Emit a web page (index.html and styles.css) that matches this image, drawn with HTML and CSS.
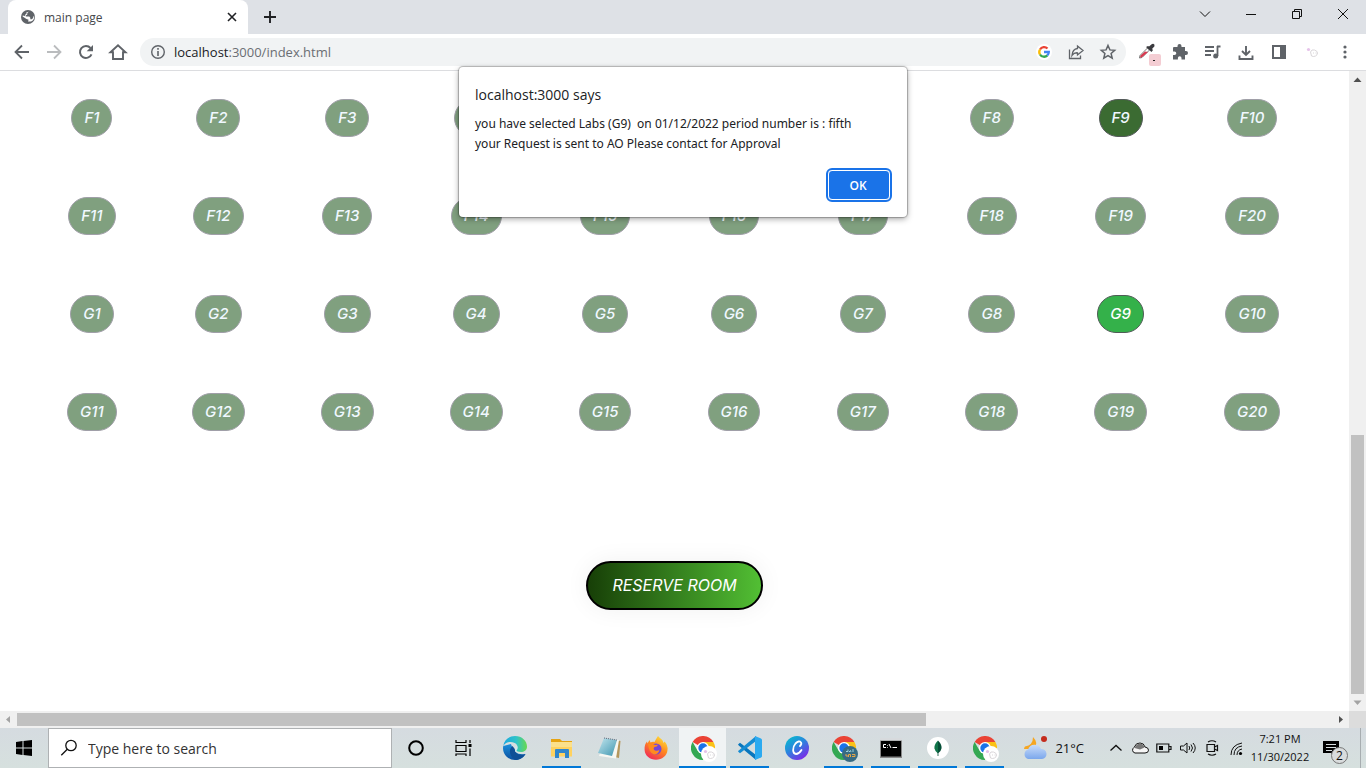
FILE: index.html
```html
<!DOCTYPE html>
<html lang="en">
<head>
<meta charset="utf-8">
<meta name="viewport" content="width=device-width, initial-scale=1">
<title>main page</title>
<link rel="stylesheet" href="styles.css">
</head>
<body>
<svg class="defs" aria-hidden="true">
  <defs>
    <linearGradient id="edge-a" x1="0" y1="0" x2="1" y2="0"><stop offset="0" stop-color="#1ba8e0"/><stop offset=".55" stop-color="#2fc3c8"/><stop offset="1" stop-color="#68d94f"/></linearGradient>
    <linearGradient id="edge-b" x1="0" y1="0" x2="0" y2="1"><stop offset="0" stop-color="#1a8fdc"/><stop offset="1" stop-color="#0b4f9e"/></linearGradient>
    <linearGradient id="canva" x1="0" y1="0" x2=".7" y2="1"><stop offset="0" stop-color="#00c4cc"/><stop offset=".5" stop-color="#2a86dd"/><stop offset="1" stop-color="#7d2ae8"/></linearGradient>
    <linearGradient id="fox" x1=".8" y1="0" x2=".2" y2="1"><stop offset="0" stop-color="#ffe53b"/><stop offset=".45" stop-color="#ff8a1f"/><stop offset="1" stop-color="#f0245c"/></linearGradient>
    <linearGradient id="note" x1="0" y1="0" x2="1" y2="1"><stop offset="0" stop-color="#c3e6ee"/><stop offset="1" stop-color="#3f96b0"/></linearGradient>
    <linearGradient id="cloud" x1="0" y1="0" x2="0" y2="1"><stop offset="0" stop-color="#c8dcfa"/><stop offset="1" stop-color="#7ba7ec"/></linearGradient>
    <symbol id="chrome" viewBox="0 0 24 24">
      <path fill="#ea4335" d="M12 12 1.600 6A12 12 0 0 1 22.400 6H12z"/>
      <path fill="#fbc116" d="M12 6h10.400A12 12 0 0 1 12 24l5.200-9z"/>
      <path fill="#34a853" d="M1.600 6A12 12 0 0 0 12 24l5.200-9-5.200 3-5.200-3z"/>
      <circle cx="12" cy="12" r="6" fill="#fff"/>
      <circle cx="12" cy="12" r="4.700" fill="#1a73e8"/>
    </symbol>
    <symbol id="profile" viewBox="0 0 16 16">
      <circle cx="8" cy="8" r="8" fill="#fff"/>
      <circle cx="4.500" cy="5.500" r="1.600" fill="#e6c3ea"/>
      <path fill="none" stroke="#cfcbcf" stroke-width=".8" d="M6.500 8q1-3 4-2t3 3-2 3-4 0zM9 9h1M11.500 9h1"/>
    </symbol>
  </defs>
</svg>

<div class="screen">
  <header class="tab-strip">
    <div class="tab">
      <svg class="i16" viewBox="0 0 16 16"><circle cx="8" cy="8" r="7" fill="#5f6368"/><path fill="#fff" d="M8.800 2.800 7.300 4v1.600l-1.500.8v1.200h3.500l1 1.200v1.400h1.500l1.300-1.200.3-1.800.9.2q0 3.600-3.300 5.200H8l.6-1.800L6.500 10 2.600 7.600l.2-1.200L5 7l.5-1.700 1-.6V3.200z"/></svg>
      <span class="tab-title">main page</span>
      <button class="plain tab-close" aria-label="Close tab"><svg class="i16" viewBox="0 0 16 16"><path class="ln" stroke-width="1.600" d="m4 4 8 8M12 4l-8 8"/></svg></button>
    </div>
    <button class="plain new-tab" aria-label="New tab"><svg class="i16" viewBox="0 0 16 16"><path class="ln" stroke-width="1.900" d="M8 2v12M2 8h12"/></svg></button>
    <div class="window-controls">
      <button class="plain" aria-label="Search tabs"><svg class="i16" viewBox="0 0 16 16"><path class="ln" d="m3 5.500 5 5 5-5"/></svg></button>
      <button class="plain" aria-label="Minimize"><svg class="i16" viewBox="0 0 16 16"><path class="ln" d="M3 8.500h10"/></svg></button>
      <button class="plain" aria-label="Restore"><svg class="i16" viewBox="0 0 16 16"><path class="ln" d="M3.500 5.500h7v7h-7zM5.500 5V3.500h7v7H11"/></svg></button>
      <button class="plain" aria-label="Close"><svg class="i16" viewBox="0 0 16 16"><path class="ln" d="m3 3 10 10M13 3 3 13"/></svg></button>
    </div>
  </header>

  <nav class="toolbar">
    <div class="nav-buttons">
      <button class="plain" aria-label="Back"><svg class="i20" viewBox="0 0 20 20"><path class="ln" stroke-width="1.800" d="M17 10H4M10 3.500 3.500 10l6.500 6.500"/></svg></button>
      <button class="plain faded" aria-label="Forward"><svg class="i20" viewBox="0 0 20 20"><path class="ln" stroke-width="1.800" d="M3 10h13M10 3.500l6.500 6.500-6.500 6.500"/></svg></button>
      <button class="plain" aria-label="Reload"><svg class="i20" viewBox="0 0 20 20"><path class="ln" stroke-width="2" d="M15.500 12.300A6 6 0 1 1 14.500 6"/><path fill="currentColor" d="M17 3v6.300h-6.300z"/></svg></button>
      <button class="plain" aria-label="Home"><svg class="i20" viewBox="0 0 20 20"><path class="ln" stroke-width="1.900" d="M2.500 10.200 10 3.300l7.500 6.900H15V17H5v-6.800z"/></svg></button>
    </div>
    <div class="omnibox">
      <button class="plain site-info" aria-label="Site information"><svg class="i16" viewBox="0 0 16 16"><circle class="ln" stroke-width="1.400" cx="8" cy="8" r="6.300"/><path class="ln" stroke-width="1.600" d="M8 7v5M8 4v1.700"/></svg></button>
      <div class="address">localhost<span>:3000/index.html</span></div>
      <button class="plain" aria-label="Search with Google"><svg class="i16" viewBox="0 0 16 16"><circle cx="8" cy="8" r="8" fill="#fff"/><g fill="none" stroke-width="2.300"><path stroke="#ea4335" d="M4 5.500a4.800 4.800 0 0 1 7.500-1"/><path stroke="#fbbc05" d="M4 10.500a4.800 4.800 0 0 1 0-5"/><path stroke="#34a853" d="M11.400 11.400A4.800 4.800 0 0 1 4 10.500"/><path stroke="#4285f4" d="M8 8h4.800a4.800 4.800 0 0 1-1.500 3.500"/></g></svg></button>
      <button class="plain" aria-label="Share"><svg class="i18" viewBox="0 0 18 18"><path class="ln" stroke-width="1.300" d="M2.500 6.500v9h11v-3M10.500 3l5.500 4.500-5.500 4.500V9.800q-3.500-.3-5.500 2.700.5-6.500 5.500-7z"/></svg></button>
      <button class="plain" aria-label="Bookmark this page"><svg class="i18" viewBox="0 0 18 18"><path class="ln" stroke-width="1.500" d="m9 2.500 1.900 4.400 4.800.4-3.600 3.200 1.100 4.700L9 12.700l-4.200 2.500 1.100-4.700-3.600-3.200 4.800-.4z"/></svg></button>
    </div>
    <div class="extensions">
      <button class="plain" aria-label="Colour picker"><svg class="i24" viewBox="0 0 24 24"><path fill="#fff" stroke="#777" d="M5 15.500 12.500 8l2 2L7 17.500 4.500 18z"/><path fill="#d93a50" d="m5.500 15.500 4.500-4 3 .5-6 5.300-2 .2z"/><path fill="#3b3b3f" d="m11 7 2-1 1 .6L17 4q3-1 2.500 2.300L17 9l1 1-1.500 2z"/><rect x="14" y="14" width="12" height="12" rx="2" fill="#f4cdd3"/><path fill="#222" d="M18 20h2v1h-2z"/></svg></button>
      <button class="plain" aria-label="Extensions"><svg class="i18" viewBox="0 0 18 18"><path fill="currentColor" d="M3 4h3.500V3a2 2 0 0 1 4 0v1H14v4h1a2 2 0 0 1 0 4h-1v4.500h-3.500V15a1.800 1.800 0 0 0-3.600 0v1.500H2V12h1.500a1.800 1.800 0 0 0 0-3.600H2V5q0-1 1-1"/></svg></button>
      <button class="plain" aria-label="Media controls"><svg class="i20" viewBox="0 0 20 20"><path class="ln" stroke-width="1.800" d="M2 5h9M2 9h9M2 13h6M14.500 4v10M14 4.500h3.500"/><circle cx="12.700" cy="14" r="2.500" fill="currentColor"/></svg></button>
      <button class="plain" aria-label="Downloads"><svg class="i20" viewBox="0 0 20 20"><path class="ln" stroke-width="1.900" d="M10 4v9M6 9l4 4 4-4M3.500 13.500V17h13v-3.500"/></svg></button>
      <button class="plain" aria-label="Side panel"><svg class="i18" viewBox="0 0 18 18"><path fill="currentColor" fill-rule="evenodd" d="M2 2h14v14H2zm2 2v10h6V4z"/></svg></button>
      <button class="plain" aria-label="Profile"><svg class="i16"><use href="#profile"/></svg></button>
      <button class="plain" aria-label="Menu"><svg class="i18" viewBox="0 0 18 18"><g fill="currentColor"><circle cx="9" cy="4" r="1.600"/><circle cx="9" cy="9" r="1.600"/><circle cx="9" cy="14" r="1.600"/></g></svg></button>
    </div>
  </nav>

  <div class="viewport">
    <main class="page">
      <div class="rooms">
        <button class="room" disabled>F1</button><button class="room" disabled>F2</button><button class="room" disabled>F3</button><button class="room" disabled>F4</button><button class="room" disabled>F5</button><button class="room" disabled>F6</button><button class="room" disabled>F7</button><button class="room" disabled>F8</button><button class="room open">F9</button><button class="room" disabled>F10</button>
        <button class="room" disabled>F11</button><button class="room" disabled>F12</button><button class="room" disabled>F13</button><button class="room" disabled>F14</button><button class="room" disabled>F15</button><button class="room" disabled>F16</button><button class="room" disabled>F17</button><button class="room" disabled>F18</button><button class="room" disabled>F19</button><button class="room" disabled>F20</button>
        <button class="room" disabled>G1</button><button class="room" disabled>G2</button><button class="room" disabled>G3</button><button class="room" disabled>G4</button><button class="room" disabled>G5</button><button class="room" disabled>G6</button><button class="room" disabled>G7</button><button class="room" disabled>G8</button><button class="room selected">G9</button><button class="room" disabled>G10</button>
        <button class="room" disabled>G11</button><button class="room" disabled>G12</button><button class="room" disabled>G13</button><button class="room" disabled>G14</button><button class="room" disabled>G15</button><button class="room" disabled>G16</button><button class="room" disabled>G17</button><button class="room" disabled>G18</button><button class="room" disabled>G19</button><button class="room" disabled>G20</button>
      </div>
      <button class="reserve">RESERVE ROOM</button>
    </main>
    <div class="vbar">
      <svg class="arrow" viewBox="0 0 17 17"><path fill="#505050" d="M4.500 11 8.500 6.500 12.500 11z"/></svg>
      <div class="vtrack"><div class="vthumb" style="height: 42.7%"></div></div>
      <svg class="arrow" viewBox="0 0 17 17"><path fill="#a3a3a3" d="M4.500 6.500h8L8.500 11z"/></svg>
    </div>
    <div class="hbar">
      <svg class="arrow" viewBox="0 0 17 17"><path fill="#a3a3a3" d="M10 5v7L6 8.500z"/></svg>
      <div class="htrack"><div class="hthumb" style="width: 69.1%"></div></div>
      <svg class="arrow" viewBox="0 0 17 17"><path fill="#505050" d="M7 5v7l4-3.500z"/></svg>
    </div>
    <div class="corner"></div>
  </div>

  <section class="dialog" role="alertdialog" aria-labelledby="dlg-title" aria-describedby="dlg-text">
    <h1 id="dlg-title">localhost:3000 says</h1>
    <p id="dlg-text">you have selected Labs (G9)  on 01/12/2022 period number is : fifth
your Request is sent to AO Please contact for Approval</p>
    <button class="ok">OK</button>
  </section>

  <footer class="taskbar">
    <button class="plain start" aria-label="Start"><svg class="i16" viewBox="0 0 16 16"><path d="m0 2 6.500-1v6.500H0zM7.500.9 16 0v7.500H7.500zM0 8.500h6.500V15L0 14zM7.500 8.500H16V16l-8.500-1z"/></svg></button>
    <label class="search">
      <svg class="i18" viewBox="0 0 18 18"><circle class="ln" stroke-width="1.300" cx="11" cy="6.500" r="5.200"/><path class="ln" stroke-width="1.300" d="m7.300 10.300-6 6"/></svg>
      <input type="text" placeholder="Type here to search" aria-label="Type here to search">
    </label>
    <div class="apps">
      <button class="app" aria-label="Cortana"><svg class="i24" viewBox="0 0 24 24"><circle cx="12" cy="12" r="6.800" fill="none" stroke="#000" stroke-width="2"/></svg></button>
      <button class="app view" aria-label="Task view"><svg class="i24" viewBox="0 0 24 24"><path fill="none" stroke="#000" stroke-width="1.200" d="M5 4v2.500h10V4M5 9.500h10v6H5zM5 20v-2h10v2M19 4v3M19 12.500V20"/><path d="M17.500 8h3v3h-3z"/></svg></button>
      <button class="app" aria-label="Edge"><svg class="i24" viewBox="0 0 24 24"><path fill="url(#edge-b)" d="M.3 10Q0 11 0 12.500A12 12 0 0 0 12 24c5 0 8.500-2.500 10.500-6Q11 20 8 8z"/><path fill="#0f4f96" d="M9.500 10C5 13 6.500 22 13.500 24c4-.5 7-2.800 9-6-6 2.500-11-.5-10.300-4.500z"/><path fill="#d5e6ea" d="M12.500 10q2.500 0 2.500 2.500-.2 1.500-1 2.500l-1.500 1q-1.500-3 0-6"/><path fill="url(#edge-a)" d="M.3 10C1 4 6 0 12 0c7 0 12 5 12 10.500 0 4-3 5.500-6 5.500-3.500 0-5-1-4.300-1.800 2-2.200 1-5.700-2-7.200C7.500 5 2.500 6 .3 10"/></svg></button>
      <button class="app running" aria-label="File Explorer"><svg class="i24" viewBox="0 0 24 24"><path fill="#e6a312" d="M1 3h9l2 2h10v4H1z"/><path fill="#ffd25f" d="M1 6h21v14.500H1z"/><path fill="#fbe08b" d="M1 6h21v5H1z"/><path fill="#3186cb" d="M5 14q0-1 1-1h12q1 0 1 1v8h-4v-5H9v5H5z"/></svg></button>
      <button class="app" aria-label="Notepad"><svg class="i24" viewBox="0 0 24 24"><path fill="#b4975d" d="m19 4 4.500 1-1.500 17-4-1z"/><path fill="#f7f7f2" d="m8 3 14 1-3 18.500L2 20z"/><path fill="url(#note)" d="m7 2 13 2-5 16-14-3z"/><path fill="none" stroke="#667" stroke-dasharray="1 1" d="m7 2 13 2"/></svg></button>
      <button class="app" aria-label="Firefox"><svg class="i24" viewBox="0 0 24 24"><path fill="url(#fox)" d="M14 0q1.500 2 3.500 3.300Q19 4.500 19.500 7l1-1.500Q24 9 23.500 14c-.5 6-5.500 9.700-11.500 9.700S1 20 .6 14C.3 10 1.500 7 3 5.500l.5 2L5.500 4l1 2.500q2-1 4-.5Q12 3 14 0"/><circle cx="12" cy="13" r="5.500" fill="#7646d7"/><path fill="#ff8b20" d="M4 8q4-1 7 1l3-.3q-.8 2.300-3.500 2.300-2 2 .5 3.500 3 1 4.500-1-1 5-5.500 5Q5 17 4 8"/></svg></button>
      <button class="app running active" aria-label="Chrome"><svg class="i24"><use href="#chrome"/></svg><svg class="badge i16"><use href="#profile"/></svg></button>
      <button class="app running" aria-label="Visual Studio Code"><svg class="i24" viewBox="0 0 24 24"><path fill="#0876bd" d="m0 8.500 2-1.700L18 19v5L1 9.800z"/><path fill="#168cd2" d="m0 15.500 2 1.700L18 5V0L1 14.200z"/><path fill="#2baaf0" d="m17 0 6 2.500Q24 3 24 4v16q0 1-1 1.500L17 24z"/></svg></button>
      <button class="app" aria-label="Canva"><svg class="i24" viewBox="0 0 24 24"><circle cx="12" cy="12" r="12" fill="url(#canva)"/><path fill="none" stroke="#fff" stroke-width="1.800" stroke-linecap="round" d="M15 10q2-2 1-3.500Q14 4 10.500 7.500C7 11.500 7.500 18 11 18q3 0 5.500-4"/></svg></button>
      <button class="app running" aria-label="Chrome, second profile"><svg class="i24"><use href="#chrome"/></svg><svg class="badge i16" viewBox="0 0 16 16"><circle cx="8" cy="8" r="8" fill="#376b83"/><path fill="none" stroke="#9ed0da" d="M4 5.500h2v-2M7 6q2-3 2 0M11 3v3"/><path fill="none" stroke="#e5a548" d="M3 9h2v2M6.500 11V8.500h2V11M10 8.500h3v2h-3"/></svg></button>
      <button class="app running" aria-label="Command Prompt"><svg class="i24" viewBox="0 0 24 24"><path fill="#888" d="M1 2h22v20H1z"/><path fill="#d7dadd" d="M1 2h22v2.500H1z"/><path d="M2 5h20v15.500H2z"/><path fill="none" stroke="#fff" d="M7 8.500H4.500v3H7M8.500 9v.7M8.500 11v.7M10 8l2 4M13.500 11.500H18"/></svg></button>
      <button class="app running" aria-label="MongoDB Compass"><svg class="i24" viewBox="0 0 24 24"><circle cx="12" cy="12" r="11" fill="#fff"/><path fill="#10754a" d="M12 4.500q-4 4-3.500 8 .5 3 3.500 5z"/><path fill="#064f37" d="M12 4.500q4 4 3.500 8-.5 3-3.500 5zM11.600 16h.8v4h-.8z"/></svg></button>
      <button class="app running" aria-label="Chrome window"><svg class="i24"><use href="#chrome"/></svg><svg class="badge i16"><use href="#profile"/></svg></button>
    </div>
    <button class="plain weather" aria-label="Weather"><svg class="i24" viewBox="0 0 24 24"><path fill="#f5a623" d="M10 1q6 6 1 12H1q0-1.500 1-2.500 8-1 8-9.500"/><path fill="url(#cloud)" d="M5 23a5 5 0 0 1 0-9.500 7 7 0 0 1 13-.5 5 5 0 0 1 1 10z"/><circle cx="21" cy="3" r="3" fill="#c42b1c"/></svg><span>21°C</span></button>
    <div class="tray">
      <button class="plain" aria-label="Show hidden icons"><svg class="i16" viewBox="0 0 16 16"><path class="ln" stroke-width="1.300" d="m2.500 10.500 5.500-5 5.500 5"/></svg></button>
      <button class="plain" aria-label="OneDrive"><svg class="i18" viewBox="0 0 18 18"><path fill="#f5f5f5" stroke="#111" d="M4 14a3 3 0 0 1-1-5.500Q5 3.500 9 4q4 0 5 4 3.500.5 3.500 3.200T14 14z"/><path fill="#777" d="M3.500 9Q5.500 4.500 9 4.500q3.500.3 4.500 4L9 10.500z"/></svg></button>
      <button class="plain" aria-label="Battery"><svg class="i16" viewBox="0 0 16 16"><path class="ln" stroke-width="1.200" d="M.8 4h12v8H.8zM13 6.500h2v3h-2"/><path d="M3 6h4v4H3z"/></svg></button>
      <button class="plain" aria-label="Volume"><svg class="i18" viewBox="0 0 18 18"><path class="ln" d="M1.500 7h3L8 4v10l-3.500-3h-3zM10 7q1.500 2 0 4M12 5.500q3 3.500 0 7M14 4q4.500 5 0 10"/></svg></button>
      <button class="plain" aria-label="Meet now"><svg class="i18" viewBox="0 0 18 18"><path class="ln" stroke-width="1.200" d="M4 5.500h7.500v7H4zM11.500 8l3-1.500v5l-3-1.500M5 3q4-2.500 8 0M5 15q4 2.500 8 0"/></svg></button>
      <button class="plain" aria-label="Network"><svg class="i18" viewBox="0 0 18 18"><path class="ln" d="M4 16Q4 6 15 4M7 16q0-8 8-9M10 16q0-5 5-6"/><circle cx="13.500" cy="14.500" r="1.600"/></svg></button>
    </div>
    <div class="clock"><time>7:21 PM</time><time>11/30/2022</time></div>
    <button class="plain notes" aria-label="Notifications"><svg class="i18" viewBox="0 0 18 18"><path d="M1 2h16v12h-5v3l-3-3H1z"/><path stroke="#d6dddf" d="M4 5.500h10M4 8.500h10M4 11.500h6"/></svg><span class="count">2</span></button>
    <div class="desk"></div>
  </footer>
</div>
</body>
</html>
```
FILE: styles.css
```css
* { box-sizing: border-box; }

body {
  margin: 0;
  background: #fff;
  color: #202124;
  font-family: "Open Sans", "Noto Sans", sans-serif;
  font-size: 12px;
}

button { font: inherit; cursor: pointer; }
svg { display: block; flex: none; }
.defs { position: absolute; width: 0; height: 0; }
.ln { fill: none; stroke: currentColor; }
.i16 { width: 16px; height: 16px; }
.i18 { width: 18px; height: 18px; }
.i20 { width: 20px; height: 20px; }
.i24 { width: 24px; height: 24px; }

.plain {
  display: flex;
  align-items: center;
  justify-content: center;
  padding: 0;
  border: 0;
  background: none;
  color: inherit;
}

.screen {
  position: relative;
  display: flex;
  flex-direction: column;
  min-height: 100vh;
}

/* Tabs and window controls */
.tab-strip {
  display: flex;
  height: 34px;
  padding-left: 8px;
  background: #dee1e6;
}
.tab {
  display: flex;
  align-items: center;
  gap: 8px;
  width: 240px;
  padding: 0 8px 0 12px;
  border-radius: 8px 8px 0 0;
  background: #fff;
}
.tab-title { flex: 1; color: #45484c; }
.new-tab { width: 44px; }
.window-controls { display: flex; height: 28px; margin-left: auto; color: #111; }
.window-controls button { width: 46px; }

/* Address bar */
.toolbar {
  display: flex;
  align-items: center;
  height: 37px;
  border-bottom: 1px solid #dcdde0;
  color: #5f6368;
}
.nav-buttons { display: flex; padding: 0 6px; }
.nav-buttons button { width: 32px; }
.toolbar .faded { color: #babcbe; }
.omnibox {
  display: flex;
  align-items: center;
  flex: 1;
  height: 28px;
  padding-right: 2px;
  border-radius: 14px;
  background: #f1f3f4;
}
.omnibox button { width: 32px; }
.omnibox .site-info { width: 34px; padding-left: 2px; }
.address { flex: 1; color: #202124; font-size: 13px; }
.address span { color: #6a6e73; }
.extensions { display: flex; align-items: center; padding: 0 5px 0 4px; }
.extensions button { width: 33px; }
.extensions svg { overflow: visible; }

/* Scrolling page */
.viewport {
  display: grid;
  flex: 1;
  grid-template-columns: 1fr 17px;
  grid-template-rows: 1fr 17px;
}
.page {
  display: flex;
  flex-direction: column;
  align-items: center;
  padding: 28px 30px 60px;
  font-family: Inter, "Open Sans", sans-serif;
}
.rooms {
  display: grid;
  grid-template-columns: 124fr repeat(8, 129fr) 134fr;
  row-gap: 60px;
  width: 100%;
  justify-items: center;
}
.room {
  height: 38px;
  padding: 0 12px 2px;
  border: 1px solid #a09fa8;
  border-radius: 19px;
  background: #80a07f;
  color: #f0f8ff;
  font-size: 15px;
  font-style: italic;
  font-weight: 500;
}
.room.open { border-color: #54595a; background: #3b6b32; }
.room.selected { border-color: #4f5c56; background: #34b14a; color: #fff; }
.reserve {
  height: 49px;
  margin-top: 130px;
  padding: 0 24px 2px;
  border: 2px solid #000;
  border-radius: 25px;
  background: linear-gradient(90deg, #173f07, #52bf34);
  box-shadow: 0 0 24px rgba(0, 0, 0, .06);
  color: #fff;
  font-size: 16px;
  font-style: italic;
}

.vbar, .hbar { display: flex; background: #f0f0f0; }
.vbar { flex-direction: column; }
.arrow { width: 17px; height: 17px; }
.vtrack { display: flex; flex: 1; flex-direction: column; justify-content: flex-end; padding: 0 2px; }
.vthumb { background: #c1c1c1; }
.htrack { display: flex; flex: 1; padding: 2px 0; }
.hthumb { background: #c1c1c1; }
.corner { background: #dcdcdc; }

/* Alert */
.dialog {
  position: absolute;
  top: 67px;
  left: 50%;
  display: flex;
  flex-direction: column;
  width: 448px;
  padding: 16px;
  border-radius: 4px;
  background: #fff;
  box-shadow: 0 0 1px 1px rgba(0, 0, 0, .25), 0 2px 6px rgba(0, 0, 0, .35);
  transform: translateX(-50%);
}
.dialog h1 { margin: 0; font-size: 14px; font-weight: 400; line-height: 24px; }
.dialog p {
  margin: 7px 0 0;
  font-family: "Noto Sans", "Open Sans", sans-serif;
  font-size: 12px;
  line-height: 20px;
  white-space: pre-wrap;
}
.ok {
  align-self: flex-end;
  width: 62px;
  height: 30px;
  margin: 16px 1px 1px 0;
  padding: 0 2px 0 0;
  border: 1px solid #fff;
  border-radius: 4px;
  outline: 2px solid #1a73e8;
  background: #1a73e8;
  color: #fff;
  font-weight: 600;
}

/* Taskbar */
.taskbar {
  display: flex;
  height: 40px;
  background: linear-gradient(#d5dbe0, #d6e0de);
  color: #111;
}
.start { width: 48px; color: #000; }
.search {
  display: flex;
  align-items: center;
  gap: 10px;
  width: 344px;
  padding-left: 11px;
  border: 1px solid #aeb1b3;
  background: #fff;
}
.search input {
  flex: 1;
  min-width: 0;
  padding: 0;
  border: 0;
  background: none;
  font: inherit;
  font-size: 14px;
}
.search input::placeholder { color: #333; opacity: 1; }
.apps { display: flex; }
.app {
  position: relative;
  display: flex;
  align-items: center;
  justify-content: center;
  width: 47px;
  padding: 0;
  border: 0;
  background: none;
}
.app.view { margin-right: 5px; }
.app.running::after {
  position: absolute;
  right: 4px;
  bottom: 0;
  left: 4px;
  height: 2px;
  background: #0078d7;
  content: "";
}
.app.active { background: #f0f3f4; }
.app.active::after { right: 0; left: 0; }
.badge { position: absolute; right: 9px; bottom: 6px; }
.weather { gap: 8px; margin-left: auto; padding-right: 20px; font-size: 13px; }
.weather svg { overflow: visible; }
.tray { display: flex; }
.tray button { width: 24px; }
.clock {
  display: flex;
  flex-direction: column;
  align-items: center;
  justify-content: center;
  width: 64px;
  padding-bottom: 1px;
  font-size: 11px;
  line-height: 18px;
}
.notes { position: relative; width: 48px; padding-right: 10px; }
.count {
  position: absolute;
  right: 12px;
  bottom: 4px;
  width: 17px;
  height: 17px;
  border: 1px solid #777;
  border-radius: 50%;
  background: #d9dcdd;
  font-size: 12px;
  line-height: 15px;
  text-align: center;
}
.desk { width: 6px; border-left: 1px solid #a7adb0; }
```
